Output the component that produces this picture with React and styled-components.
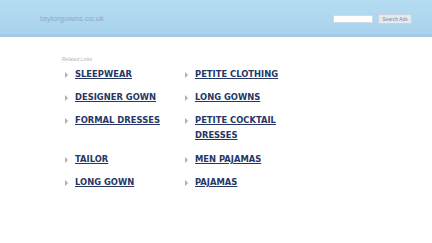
import styled, { createGlobalStyle } from "styled-components";

const Global = createGlobalStyle`
  html, body { margin: 0; padding: 0; background: #fff; }
  body { font-family: "DejaVu Sans", sans-serif; }
`;

const links = [
  "SLEEPWEAR",
  "PETITE CLOTHING",
  "DESIGNER GOWN",
  "LONG GOWNS",
  "FORMAL DRESSES",
  "PETITE COCKTAIL DRESSES",
  "TAILOR",
  "MEN PAJAMAS",
  "LONG GOWN",
  "PAJAMAS",
];

const Header = styled.div`
  height: 34px;
  border-bottom: 3px solid #a3cae4;
  background: linear-gradient(#b5dcf1, #a9d2ec);
  display: flex;
  align-items: center;
  justify-content: space-between;
  padding: 0 20px 0 40px;
`;

const Domain = styled.div`
  font-family: "Liberation Sans", Arial, sans-serif;
  font-size: 8px;
  color: #8ea9c9;
  margin-top: 3px;
`;

const Search = styled.div`
  display: flex;
  align-items: center;
  gap: 5px;
  margin-top: 3px;
`;

const Input = styled.div`
  width: 38px;
  height: 6px;
  background: #fff;
  border: 1px solid #c7dcea;
`;

const Button = styled.div`
  font-family: "Liberation Sans", Arial, sans-serif;
  font-size: 5px;
  color: #7d8a99;
  background: #e4e9ee;
  border: 1px solid #c8d3dc;
  padding: 1px 3px;
  width: 26px;
  text-align: center;
`;

const Main = styled.div`
  padding: 19px 0 0 62px;
`;

const Caption = styled.div`
  font-family: "Liberation Sans", Arial, sans-serif;
  font-size: 5px;
  color: #b4b4b4;
  margin-bottom: 5px;
`;

const Grid = styled.div`
  display: grid;
  grid-template-columns: 120px 120px;
  row-gap: 8px;
`;

const Item = styled.div`
  display: flex;
  align-items: flex-start;
  padding-left: 3px;
  margin-top: ${(p) => (p.$shift ? "1px" : "0")};
`;

const Arrow = styled.span`
  flex: none;
  width: 0;
  height: 0;
  margin-top: 4.5px;
  margin-right: 7px;
  border-top: 3px solid transparent;
  border-bottom: 3px solid transparent;
  border-left: 3.5px solid #b0b0b0;
`;

const Link = styled.a`
  font-size: 8.4px;
  font-weight: bold;
  line-height: 15px;
  color: #263766;
  text-decoration: underline;
  width: 100px;
`;

export default function App() {
  return (
    <>
      <Global />
      <Header>
        <Domain>taylorgowns.co.uk</Domain>
        <Search>
          <Input />
          <Button>Search Ads</Button>
        </Search>
      </Header>
      <Main>
        <Caption>Related Links</Caption>
        <Grid>
          {links.map((l, i) => (
            <Item key={l} $shift={i === 6 || i === 7}>
              <Arrow />
              <Link>{l}</Link>
            </Item>
          ))}
        </Grid>
      </Main>
    </>
  );
}
